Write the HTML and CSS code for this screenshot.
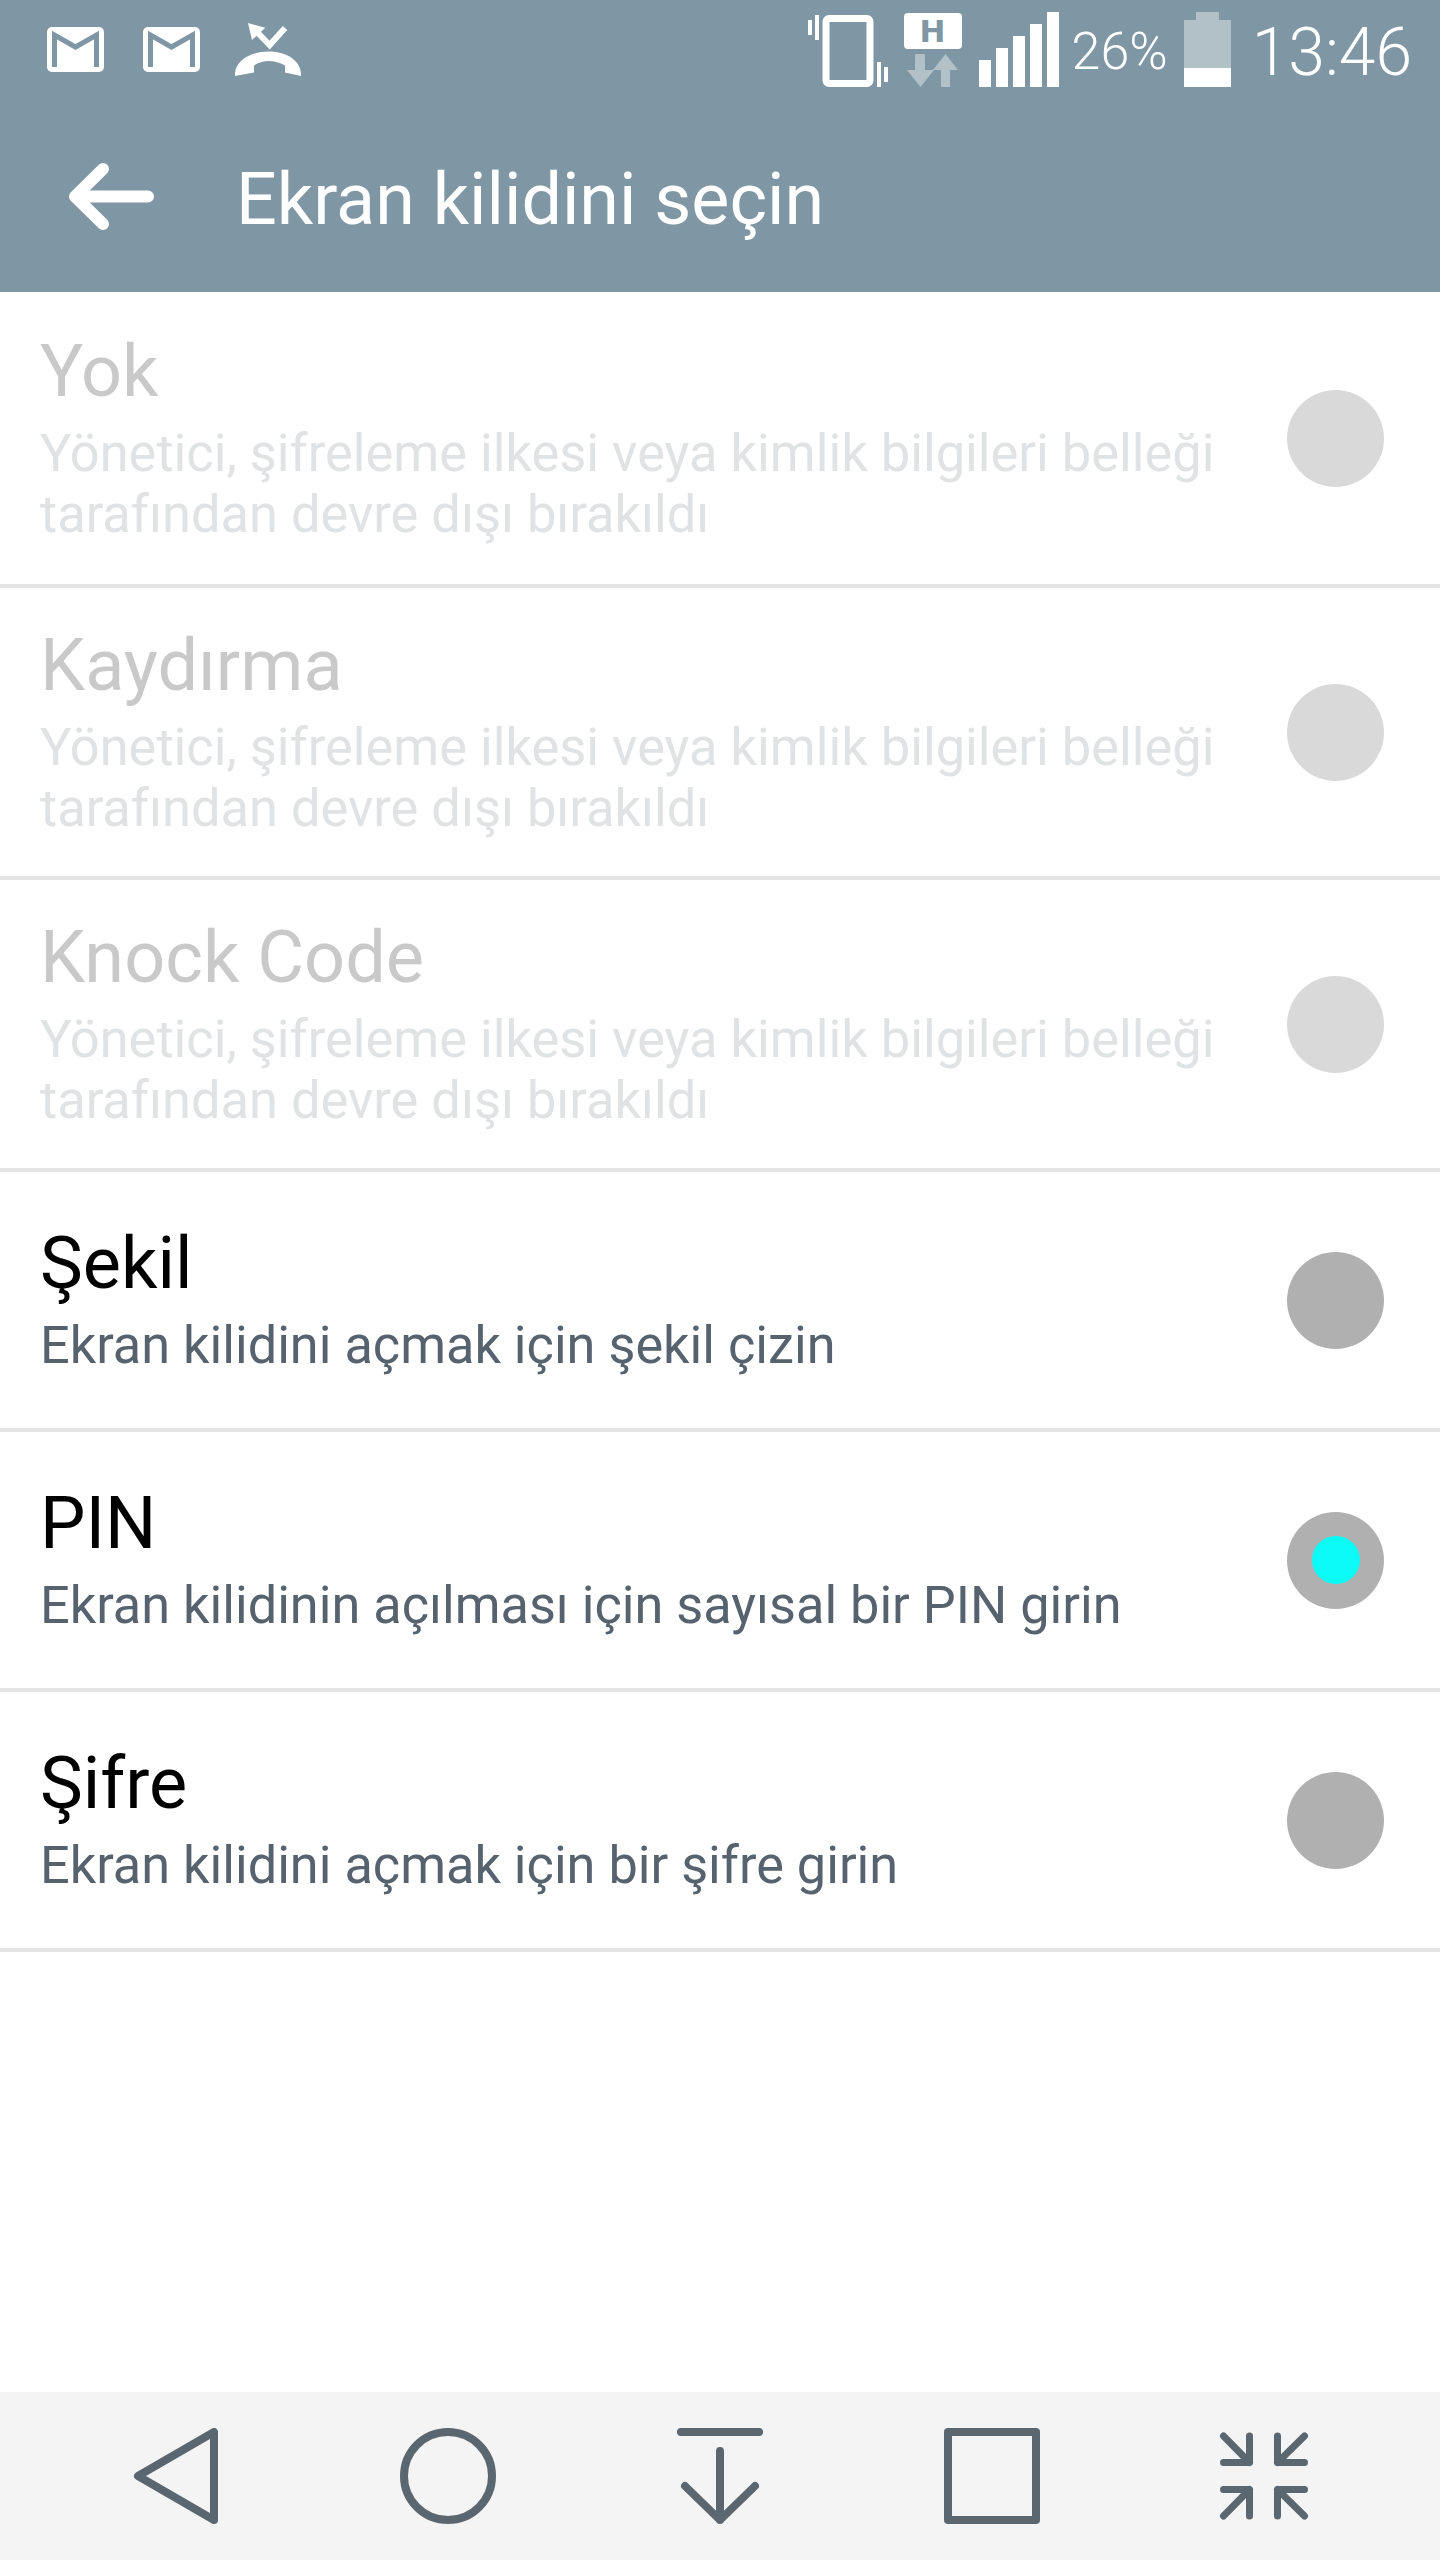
FILE: index.html
```html
<!DOCTYPE html>
<html lang="tr">
<head>
<meta charset="utf-8">
<title>Ekran kilidini seçin</title>
<link rel="stylesheet" href="styles.css">
</head>
<body>
<div class="screen">
  <header class="top">
    <div class="status">
      <div class="status-left">
        <svg class="ic-mail" viewBox="0 0 57 45"><rect width="57" height="45" rx="5" fill="#fff"/><path d="M7.500 40V8L28.500 20 49.500 8V40" fill="none" stroke="#7f97a5" stroke-width="5"/></svg>
        <svg class="ic-mail" viewBox="0 0 57 45"><rect width="57" height="45" rx="5" fill="#fff"/><path d="M7.500 40V8L28.500 20 49.500 8V40" fill="none" stroke="#7f97a5" stroke-width="5"/></svg>
        <svg class="ic-call" viewBox="0 0 67 54"><path d="M0 54C-1 40 14 29.500 33.500 29.500S67 40 66 54L50 50.500V43.500C40 37.500 27 37.500 19 43.500V50.500Z" fill="#fff"/><path d="M13 1L30.300 5.700 17 18z" fill="#fff"/><path d="M22 10L34.700 23 50 6" fill="none" stroke="#fff" stroke-width="6"/></svg>
      </div>
      <div class="status-right">
        <svg class="ic-vib" viewBox="0 0 80 72"><path d="M2 5v15M9 0v25M71 47v25M78 52v15" stroke="#fff" stroke-width="4" fill="none"/><rect x="18" y="3.500" width="44" height="65" rx="3" fill="none" stroke="#fff" stroke-width="7"/></svg>
        <div class="net">
          <span class="net-h">H</span>
          <svg class="ic-arrows" viewBox="0 0 52 33"><path d="M8 0h10v16h9L13.500 33 0 16h8z" fill="#b2c1c8"/><path d="M34 33V16h-8L38.500 0 51 16h-8v17z" fill="#b2c1c8"/></svg>
        </div>
        <svg class="ic-signal" viewBox="0 0 80 75"><rect y="48" width="12" height="27" fill="#fff"/><rect x="17" y="36" width="12" height="39" fill="#fff"/><rect x="34" y="24" width="12" height="51" fill="#fff"/><rect x="51" y="12" width="12" height="63" fill="#fff"/><rect x="68" width="12" height="75" fill="#fff"/></svg>
        <span class="pct">26%</span>
        <div class="battery"><span class="battery-tip"></span><span class="battery-body"><span class="battery-fill"></span></span></div>
        <span class="clock">13:46</span>
      </div>
    </div>
    <div class="bar">
      <svg class="ic-back" viewBox="0 0 85 67"><path d="M34 6L6 33.500l28 27.500M7 33.500h72" fill="none" stroke="#fff" stroke-width="12" stroke-linecap="round" stroke-linejoin="round"/></svg>
      <h1 class="title">Ekran kilidini seçin</h1>
    </div>
  </header>
  <main class="list">
    <div class="row row-tall row-first off"><div class="txt"><div class="name">Yok</div><div class="desc">Yönetici, şifreleme ilkesi veya kimlik bilgileri belleği<br>tarafından devre dışı bırakıldı</div></div><span class="radio"></span></div>
    <div class="row row-tall off"><div class="txt"><div class="name">Kaydırma</div><div class="desc">Yönetici, şifreleme ilkesi veya kimlik bilgileri belleği<br>tarafından devre dışı bırakıldı</div></div><span class="radio"></span></div>
    <div class="row row-tall off"><div class="txt"><div class="name">Knock Code</div><div class="desc">Yönetici, şifreleme ilkesi veya kimlik bilgileri belleği<br>tarafından devre dışı bırakıldı</div></div><span class="radio"></span></div>
    <div class="row"><div class="txt"><div class="name">Şekil</div><div class="desc">Ekran kilidini açmak için şekil çizin</div></div><span class="radio"></span></div>
    <div class="row"><div class="txt"><div class="name">PIN</div><div class="desc">Ekran kilidinin açılması için sayısal bir PIN girin</div></div><span class="radio on"></span></div>
    <div class="row"><div class="txt"><div class="name">Şifre</div><div class="desc">Ekran kilidini açmak için bir şifre girin</div></div><span class="radio"></span></div>
  </main>
  <nav class="nav">
    <svg class="ic-nav" viewBox="0 0 96 96"><path d="M10 48L86 4v88z" fill="none" stroke="#5a6770" stroke-width="8" stroke-linejoin="round"/></svg>
    <svg class="ic-nav" viewBox="0 0 96 96"><circle cx="48" cy="48" r="44" fill="none" stroke="#5a6770" stroke-width="8"/></svg>
    <svg class="ic-nav" viewBox="0 0 96 96"><path d="M9 4h78M48 23v69M13 58l35 34 35-34" fill="none" stroke="#5a6770" stroke-width="8" stroke-linecap="round" stroke-linejoin="round"/></svg>
    <svg class="ic-nav" viewBox="0 0 96 96"><rect x="4" y="4" width="88" height="88" fill="none" stroke="#5a6770" stroke-width="8" stroke-linejoin="round"/></svg>
    <svg class="ic-nav" viewBox="0 0 96 96"><path d="M7.500 8l26 26.500M33.500 8v26.500h-26M88.500 8l-27 26.500M61.500 8v26.500h27M7.500 88l26-26.500M33.500 88V61.500h-26M88.500 88l-27-26.500M61.500 88V61.500h27" fill="none" stroke="#5a6770" stroke-width="7" stroke-linecap="round" stroke-linejoin="round"/></svg>
  </nav>
</div>
</body>
</html>
```
FILE: styles.css
```css
* { box-sizing: border-box; }
html, body { margin: 0; padding: 0; }
body { background: #fff; font-family: Roboto, "Noto Sans", sans-serif; }
.screen { width: 1440px; height: 2560px; display: flex; flex-direction: column; overflow: hidden; }
.top { height: 292px; background: #7f97a5; flex: none; color: #fff; }
.status { height: 100px; display: flex; justify-content: space-between; align-items: flex-start; padding: 0 28px 0 47px; }
.status-left { display: flex; align-items: flex-start; gap: 39px; padding-top: 27px; }
.ic-mail { width: 57px; height: 45px; }
.ic-call { width: 67px; height: 54px; margin-top: -5px; flex: none; margin-left: -4px; }
.status-right { display: flex; align-items: flex-start; padding-top: 12px; }
.ic-vib { width: 80px; height: 72px; margin-top: 3px; }
.net { width: 58px; margin-left: 16px; display: flex; flex-direction: column; align-items: center; gap: 5px; padding-top: 1px; }
.net-h { width: 58px; height: 36px; background: #fff; color: #7f97a5; border-radius: 4px; font: 700 31px/36px "DejaVu Sans", sans-serif; text-align: center; }
.ic-arrows { width: 52px; height: 33px; }
.ic-signal { width: 80px; height: 75px; margin-left: 17px; }
.pct { font-size: 52px; font-weight: 300; line-height: 64px; margin: 8px 0 0 13px; }
.battery { width: 47px; margin-left: 16px; display: flex; flex-direction: column; align-items: center; }
.battery-tip { width: 23px; height: 8px; background: #b2c1c8; }
.battery-body { width: 47px; height: 67px; background: #b2c1c8; display: flex; align-items: flex-end; }
.battery-fill { width: 100%; height: 19px; background: #fff; }
.clock { font-size: 66px; font-weight: 300; line-height: 64px; margin: 9px 0 0 21px; }
.bar { height: 192px; display: flex; align-items: center; padding: 0 0 0 69px; }
.ic-back { width: 85px; height: 67px; }
.title { margin: 6px 0 0 82px; font-size: 71.8px; font-weight: 400; }
.list { flex: 1; }
.row { height: 260px; display: flex; align-items: center; justify-content: space-between; border-bottom: 4px solid #e4e4e4; padding: 0 56px 0 40px; }
.row-tall { height: 292px; }
.row-first { height: 296px; }
.txt { padding-bottom: 2px; }
.name { font-size: 72px; line-height: 84px; color: #000; }
.desc { font-size: 52.25px; line-height: 61px; color: #56636f; margin-top: 9px; }
.off .name { color: #c9c9c9; }
.off .desc { font-size: 52.4px; color: #e0e2e3; }
.radio { width: 97px; height: 97px; border-radius: 50%; background: #b0b0b0; display: flex; align-items: center; justify-content: center; flex: none; }
.off .radio { background: #d9d9d9; }
.on::after { content: ""; width: 48px; height: 48px; border-radius: 50%; background: #0cfbf8; }
.nav { height: 168px; flex: none; background: #f4f4f4; display: flex; align-items: center; justify-content: space-between; padding: 0 128px; }
.ic-nav { width: 96px; height: 96px; }
```
